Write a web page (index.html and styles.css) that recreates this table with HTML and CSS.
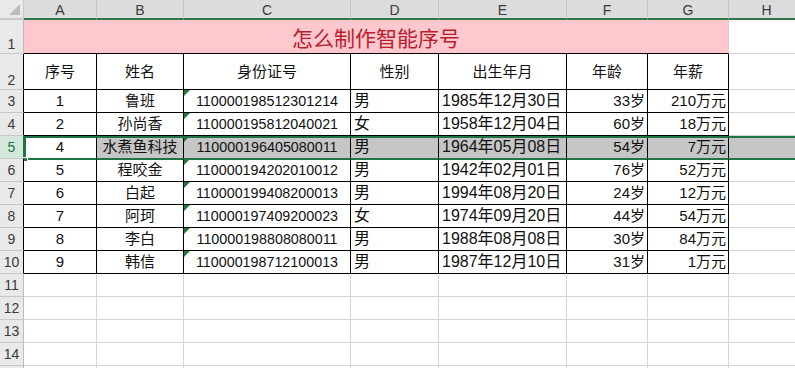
FILE: index.html
```html
<!DOCTYPE html>
<html lang="zh-CN">
<head>
<meta charset="utf-8">
<title>怎么制作智能序号</title>
<link rel="stylesheet" href="styles.css">
</head>
<body>
<div class="sheet">
  <div class="row hdr">
    <div class="corner"><span class="corner-tri"></span></div>
    <div class="ch">A</div><div class="ch">B</div><div class="ch">C</div><div class="ch">D</div>
    <div class="ch">E</div><div class="ch">F</div><div class="ch">G</div><div class="ch">H</div>
  </div>

  <div class="row r1">
    <div class="rh bottom">1</div>
    <div class="title">怎么制作智能序号</div>
    <div class="c"></div>
  </div>

  <div class="row r2">
    <div class="rh bottom tb">2</div>
    <div class="c b ctr">序号</div><div class="c b ctr">姓名</div><div class="c b ctr">身份证号</div>
    <div class="c b ctr">性别</div><div class="c b ctr">出生年月</div><div class="c b ctr">年龄</div>
    <div class="c b ctr">年薪</div><div class="c"></div>
  </div>

  <div class="row">
    <div class="rh tb">3</div>
    <div class="c b ctr">1</div><div class="c b ctr">鲁班</div><div class="c b ctr id"><span class="tri"></span>110000198512301214</div>
    <div class="c b big">男</div><div class="c b big">1985年12月30日</div><div class="c b rt">33岁</div><div class="c b rt">210万元</div><div class="c"></div>
  </div>
  <div class="row">
    <div class="rh tb">4</div>
    <div class="c b ctr">2</div><div class="c b ctr">孙尚香</div><div class="c b ctr id"><span class="tri"></span>110000195812040021</div>
    <div class="c b big">女</div><div class="c b big">1958年12月04日</div><div class="c b rt">60岁</div><div class="c b rt">18万元</div><div class="c"></div>
  </div>
  <div class="row sel">
    <div class="rh tb rh-sel">5</div>
    <div class="c b ctr">4</div><div class="c b ctr g">水煮鱼科技</div><div class="c b ctr id g"><span class="tri"></span>110000196405080011</div>
    <div class="c b big g">男</div><div class="c b big g">1964年05月08日</div><div class="c b rt g">54岁</div><div class="c b rt g">7万元</div><div class="c g"></div>
    <div class="selbox"><span class="handle"></span></div>
  </div>
  <div class="row">
    <div class="rh tb">6</div>
    <div class="c b ctr">5</div><div class="c b ctr">程咬金</div><div class="c b ctr id"><span class="tri"></span>110000194202010012</div>
    <div class="c b big">男</div><div class="c b big">1942年02月01日</div><div class="c b rt">76岁</div><div class="c b rt">52万元</div><div class="c"></div>
  </div>
  <div class="row">
    <div class="rh tb">7</div>
    <div class="c b ctr">6</div><div class="c b ctr">白起</div><div class="c b ctr id"><span class="tri"></span>110000199408200013</div>
    <div class="c b big">男</div><div class="c b big">1994年08月20日</div><div class="c b rt">24岁</div><div class="c b rt">12万元</div><div class="c"></div>
  </div>
  <div class="row">
    <div class="rh tb">8</div>
    <div class="c b ctr">7</div><div class="c b ctr">阿珂</div><div class="c b ctr id"><span class="tri"></span>110000197409200023</div>
    <div class="c b big">女</div><div class="c b big">1974年09月20日</div><div class="c b rt">44岁</div><div class="c b rt">54万元</div><div class="c"></div>
  </div>
  <div class="row">
    <div class="rh tb">9</div>
    <div class="c b ctr">8</div><div class="c b ctr">李白</div><div class="c b ctr id"><span class="tri"></span>110000198808080011</div>
    <div class="c b big">男</div><div class="c b big">1988年08月08日</div><div class="c b rt">30岁</div><div class="c b rt">84万元</div><div class="c"></div>
  </div>
  <div class="row">
    <div class="rh tb">10</div>
    <div class="c b ctr">9</div><div class="c b ctr">韩信</div><div class="c b ctr id"><span class="tri"></span>110000198712100013</div>
    <div class="c b big">男</div><div class="c b big">1987年12月10日</div><div class="c b rt">31岁</div><div class="c b rt">1万元</div><div class="c"></div>
  </div>

  <div class="row"><div class="rh">11</div><div class="c"></div><div class="c"></div><div class="c"></div><div class="c"></div><div class="c"></div><div class="c"></div><div class="c"></div><div class="c"></div></div>
  <div class="row"><div class="rh">12</div><div class="c"></div><div class="c"></div><div class="c"></div><div class="c"></div><div class="c"></div><div class="c"></div><div class="c"></div><div class="c"></div></div>
  <div class="row"><div class="rh">13</div><div class="c"></div><div class="c"></div><div class="c"></div><div class="c"></div><div class="c"></div><div class="c"></div><div class="c"></div><div class="c"></div></div>
  <div class="row"><div class="rh">14</div><div class="c"></div><div class="c"></div><div class="c"></div><div class="c"></div><div class="c"></div><div class="c"></div><div class="c"></div><div class="c"></div></div>
  <div class="row"><div class="rh"></div><div class="c"></div><div class="c"></div><div class="c"></div><div class="c"></div><div class="c"></div><div class="c"></div><div class="c"></div><div class="c"></div></div>
</div>
</body>
</html>
```

FILE: styles.css
```css
* { box-sizing: border-box; }
html, body { margin: 0; padding: 0; background: #fff; overflow: hidden; }
body {
  font-family: "Liberation Sans", "Noto Sans CJK SC", sans-serif;
  font-size: 15px;
  color: #111;
}
.sheet { width: 795px; height: 368px; overflow: hidden; }
.row {
  display: grid;
  grid-template-columns: 24px 73px 87px 167px 88px 128px 81px 81px 76px;
  height: 23px;
  position: relative;
}
.hdr { height: 20px; }
.r1 { height: 34px; grid-template-columns: 24px 705px 76px; }
.r2 { height: 36px; }

.corner {
  background: #e9e9e9;
  border-right: 1px solid #c8c8c8;
  border-bottom: 2px solid #c8c8c8;
  position: relative;
}
.corner-tri {
  position: absolute;
  right: 3px; bottom: 3px;
  width: 0; height: 0;
  border-left: 11px solid transparent;
  border-bottom: 11px solid #bdbdbd;
}
.ch {
  background: #dcdcdc;
  border-right: 1px solid #c4c4c4;
  border-bottom: 2px solid #2f7649;
  color: #3a3a3a;
  font-size: 14px;
  display: flex; align-items: center; justify-content: center;
  padding-top: 1px;
}

.rh {
  background: #e9e9e9;
  border-right: 1px solid #bcbcbc;
  border-bottom: 1px solid #c8c8c8;
  color: #3a3a3a;
  font-size: 14px;
  display: flex; align-items: center; justify-content: center;
}
.rh.bottom { align-items: flex-end; padding-bottom: 1px; }
.rh.tb { border-right-color: #000; }
.rh-sel { background: #d3e8da; color: #217346; }

.c {
  border-right: 1px solid #d4d4d4;
  border-bottom: 1px solid #d4d4d4;
  display: flex; align-items: center;
  white-space: nowrap;
  overflow: hidden;
  position: relative;
  line-height: 18px;
}
.c.b { border-right-color: #000; border-bottom-color: #000; }
.ctr { justify-content: center; }
.rt { justify-content: flex-end; padding-right: 2px; }
.big { font-size: 16px; padding-left: 3px; }
.id { font-size: 14.3px; }
.g { background: #c6c6c6; }

.title {
  background: #ffc7ce;
  border-bottom: 1px solid #000;
  border-right: 1px solid #e8c8cc;
  color: #b81e2c;
  font-size: 21px;
  display: flex; align-items: flex-end; justify-content: center;
  padding-bottom: 2px;
  line-height: 24px;
}

.tri {
  position: absolute;
  left: 0; top: 0;
  width: 0; height: 0;
  border-top: 6px solid #1f7a3a;
  border-right: 6px solid transparent;
}

.selbox {
  position: absolute;
  left: 23px; right: -10px;
  top: 0; bottom: -1px;
  border: 2px solid #217346;
  border-left-width: 3px;
  pointer-events: none;
}
.handle {
  position: absolute;
  left: -3px; bottom: -4px;
  width: 5px; height: 5px;
  background: #217346;
  border: 1px solid #fff;
  border-left: none;
}
```
